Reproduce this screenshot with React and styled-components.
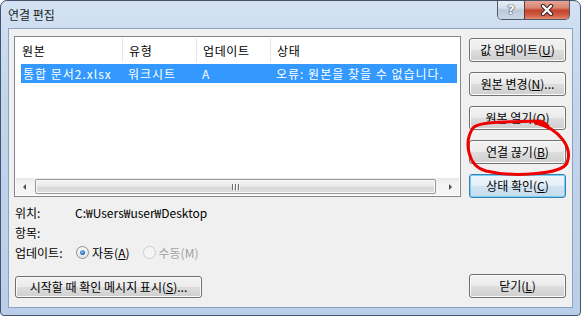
import styled, { createGlobalStyle } from "styled-components";

const GlobalStyle = createGlobalStyle`
  * { box-sizing: border-box; }
  body {
    margin: 0;
    background: #ffffff;
    font-family: "Noto Sans CJK KR", "Noto Sans", sans-serif;
    font-size: 12px;
  }
`;

const Window = styled.div`
  position: relative;
  width: 581px;
  height: 316px;
  border: 1px solid #46536a;
  border-radius: 7px 7px 4px 4px;
  padding: 0 7px 7px 7px;
  background: linear-gradient(180deg, #d3e2f3 0%, #c2d6ed 30%, #b9cfe9 100%);
  display: flex;
  flex-direction: column;
  overflow: hidden;
`;

const TitleBar = styled.div`
  height: 27px;
  display: flex;
  justify-content: space-between;
  align-items: flex-start;
`;

const TitleText = styled.div`
  align-self: center;
  line-height: 14px;
  color: #1e1e1e;
  margin-top: 1px;
`;

const CaptionGroup = styled.div`
  display: flex;
  height: 20px;
  margin-top: -1px;
  margin-right: 3px;
  border: 1px solid #4e5a6c;
  border-top: none;
  border-radius: 0 0 5px 5px;
  overflow: hidden;
`;

const HelpButton = styled.div`
  width: 26px;
  height: 19px;
  display: flex;
  align-items: center;
  justify-content: center;
  background: linear-gradient(180deg, #e8eef6 0%, #d6e0ec 40%, #bccadb 55%, #c9d7e6 100%);
  color: #ffffff;
  font-family: "DejaVu Sans", sans-serif;
  font-weight: bold;
  font-size: 13px;
  line-height: 13px;
  text-shadow: 0 0 1px #2d3a4a, 0 0 1px #2d3a4a, 0 0 1px #2d3a4a;
`;

const CloseButton = styled.div`
  width: 45px;
  height: 19px;
  display: flex;
  align-items: center;
  justify-content: center;
  border-left: 1px solid #5b3a3a;
  background-color: #c94a33;
  background-image: linear-gradient(180deg, #e9a99a 0%, #d98672 40%, #c5432c 55%, #cf5c43 80%, #e08a6f 100%);
`;

const Client = styled.div`
  flex: 1;
  border: 1px solid #8ea2bd;
  background: #f0f0f0;
  padding: 7px 6px 9px 5px;
  display: flex;
  flex-direction: column;
`;

const TopArea = styled.div`
  display: flex;
  gap: 8px;
`;

const LeftPane = styled.div`
  width: 447px;
  display: flex;
  flex-direction: column;
`;

const ListBox = styled.div`
  height: 161px;
  border: 1px solid #828790;
  background: #ffffff;
  padding: 1px;
  display: flex;
  flex-direction: column;
`;

const HeaderRow = styled.div`
  display: grid;
  grid-template-columns: 107px 74px 74px 1fr;
  height: 24px;
  background: #ffffff;
`;

const HeaderCell = styled.div`
  display: flex;
  align-items: center;
  padding-left: 6px;
  letter-spacing: 0.6px;
  color: #000;
  border-right: ${(p) => (p.$last ? "none" : "1px solid #e3e5e8")};
`;

const Rows = styled.div`
  flex: 1;
  padding-top: 2px;
`;

const DataRow = styled.div`
  display: grid;
  grid-template-columns: 102px 74px 74px 1fr;
  height: 19px;
  margin: 0 2px 0 5px;
  background: ${(p) => (p.$selected ? "#3399ff" : "transparent")};
  color: ${(p) => (p.$selected ? "#ffffff" : "#000000")};
`;

const DataCell = styled.div`
  display: flex;
  align-items: center;
  padding-left: ${(p) => (p.$first ? 2 : 5)}px;
  letter-spacing: 1px;
  white-space: nowrap;
  overflow: hidden;
`;

const HScroll = styled.div`
  height: 17px;
  display: flex;
  align-items: center;
  background: linear-gradient(180deg, #e9e9e9 0%, #f5f5f5 40%, #f5f5f5 100%);
`;

const ArrowBtn = styled.div`
  width: 17px;
  height: 17px;
  display: flex;
  align-items: center;
  justify-content: center;
`;

const Arrow = styled.div`
  width: 0;
  height: 0;
  border-top: 3px solid transparent;
  border-bottom: 3px solid transparent;
  ${(p) =>
    p.$dir === "left"
      ? "border-right: 3px solid #4d4d4d;"
      : "border-left: 3px solid #4d4d4d;"}
`;

const Thumb = styled.div`
  flex: 1;
  height: 15px;
  margin: 0 6px 0 2px;
  border: 1px solid #979797;
  border-radius: 2px;
  background: linear-gradient(180deg, #f3f3f3 0%, #e8e8e8 50%, #d6d6d6 51%, #e0e0e0 100%);
  box-shadow: inset 0 0 0 1px #fbfbfb;
  display: flex;
  align-items: center;
  justify-content: center;
  gap: 2px;
`;

const Grip = styled.span`
  width: 1px;
  height: 6px;
  background: #6b6b6b;
  box-shadow: 1px 0 0 #f5f5f5;
`;

const InfoBlock = styled.div`
  margin-top: 5px;
  padding-left: 1px;
`;

const InfoRow = styled.div`
  height: 20px;
  display: flex;
  align-items: center;
`;

const Label = styled.div`
  width: 60px;
  white-space: nowrap;
`;

const Value = styled.div`
  white-space: nowrap;
`;

const RadioWrap = styled.div`
  display: flex;
  align-items: center;
  margin-left: ${(p) => p.$ml}px;
  color: ${(p) => (p.$disabled ? "#a2a2a2" : "#000")};
`;

const RadioCircle = styled.span`
  width: 13px;
  height: 13px;
  border-radius: 50%;
  border: 1px solid ${(p) => (p.$disabled ? "#cdcdcd" : "#8e8f8f")};
  background: ${(p) =>
    p.$disabled
      ? "#f4f4f4"
      : "radial-gradient(circle at 50% 35%, #ffffff 0%, #e8e8e8 70%, #d3d3d3 100%)"};
  display: flex;
  align-items: center;
  justify-content: center;
  margin-right: 3px;
`;

const RadioDot = styled.span`
  width: 5px;
  height: 5px;
  border-radius: 50%;
  background: radial-gradient(circle at 40% 35%, #8cc4ee 0%, #2a72b8 60%, #14508d 100%);
`;

const ButtonColumn = styled.div`
  width: 97px;
  padding-top: 2px;
  display: flex;
  flex-direction: column;
  gap: 10px;
`;

const Button = styled.div`
  width: ${(p) => p.$w || 97}px;
  height: ${(p) => p.$h || 24}px;
  display: flex;
  align-items: center;
  justify-content: center;
  border: 1px solid ${(p) => (p.$default ? "#3c7fb1" : "#707070")};
  border-radius: 3px;
  background: ${(p) =>
    p.$default
      ? "linear-gradient(180deg, #eef6fb 0%, #e3eef7 50%, #d0e3f1 51%, #c6dcec 100%)"
      : "linear-gradient(180deg, #f2f2f2 0%, #ebebeb 50%, #dddddd 51%, #cfcfcf 100%)"};
  box-shadow: ${(p) =>
    p.$default ? "inset 0 0 0 1px #6fd2f5" : "inset 0 0 0 1px #fbfbfb"};
  color: #000;
  white-space: nowrap;
  line-height: 14px;
  padding-bottom: 1px;
`;

const BottomRow = styled.div`
  margin-top: auto;
  display: flex;
  justify-content: space-between;
  align-items: flex-end;
  padding-left: 1px;
`;

const Annotation = styled.svg`
  position: absolute;
  left: 455px;
  top: 112px;
  pointer-events: none;
`;

function App() {
  return (
    <>
      <GlobalStyle />
      <Window>
        <TitleBar>
          <TitleText>연결 편집</TitleText>
          <CaptionGroup>
            <HelpButton>?</HelpButton>
            <CloseButton>
              <svg width="16" height="12" viewBox="0 0 16 12">
                <path d="M4 2 L12 10 M12 2 L4 10" stroke="#3a2424" strokeWidth="4.4" strokeLinecap="round" />
                <path d="M4 2 L12 10 M12 2 L4 10" stroke="#ffffff" strokeWidth="2.4" strokeLinecap="round" />
              </svg>
            </CloseButton>
          </CaptionGroup>
        </TitleBar>
        <Client>
          <TopArea>
            <LeftPane>
              <ListBox>
                <HeaderRow>
                  <HeaderCell>원본</HeaderCell>
                  <HeaderCell>유형</HeaderCell>
                  <HeaderCell>업데이트</HeaderCell>
                  <HeaderCell $last>상태</HeaderCell>
                </HeaderRow>
                <Rows>
                  <DataRow $selected>
                    <DataCell $first>통합 문서2.xlsx</DataCell>
                    <DataCell>워크시트</DataCell>
                    <DataCell>A</DataCell>
                    <DataCell>오류: 원본을 찾을 수 없습니다.</DataCell>
                  </DataRow>
                </Rows>
                <HScroll>
                  <ArrowBtn>
                    <Arrow $dir="left" />
                  </ArrowBtn>
                  <Thumb>
                    <Grip />
                    <Grip />
                    <Grip />
                  </Thumb>
                  <ArrowBtn>
                    <Arrow $dir="right" />
                  </ArrowBtn>
                </HScroll>
              </ListBox>
              <InfoBlock>
                <InfoRow>
                  <Label>위치:</Label>
                  <Value>C:₩Users₩user₩Desktop</Value>
                </InfoRow>
                <InfoRow>
                  <Label>항목:</Label>
                </InfoRow>
                <InfoRow>
                  <Label>업데이트:</Label>
                  <RadioWrap $ml={1}>
                    <RadioCircle>
                      <RadioDot />
                    </RadioCircle>
                    자동(<u>A</u>)
                  </RadioWrap>
                  <RadioWrap $ml={13} $disabled>
                    <RadioCircle $disabled />
                    수동(M)
                  </RadioWrap>
                </InfoRow>
              </InfoBlock>
            </LeftPane>
            <ButtonColumn>
              <Button>
                값 업데이트(<u>U</u>)
              </Button>
              <Button>
                원본 변경(<u>N</u>)...
              </Button>
              <Button>
                원본 열기(<u>O</u>)
              </Button>
              <Button>
                연결 끊기(<u>B</u>)
              </Button>
              <Button $default>
                상태 확인(<u>C</u>)
              </Button>
            </ButtonColumn>
          </TopArea>
          <BottomRow>
            <Button $w={187} $h={22}>
              시작할 때 확인 메시지 표시(<u>S</u>)...
            </Button>
            <Button>
              닫기(<u>L</u>)
            </Button>
          </BottomRow>
        </Client>
        <Annotation width="120" height="70" viewBox="0 0 120 70">
          <path
            d="M80 10 C104 16, 117 35, 111 50 C105 62, 55 64, 30 58 C11 53, 8 28, 17 15 C23 8, 55 9, 82 8 C86 8, 90 11, 92 13"
            fill="none"
            stroke="#ee0000"
            strokeWidth="3"
            strokeLinecap="round"
          />
        </Annotation>
      </Window>
    </>
  );
}

export default App;
